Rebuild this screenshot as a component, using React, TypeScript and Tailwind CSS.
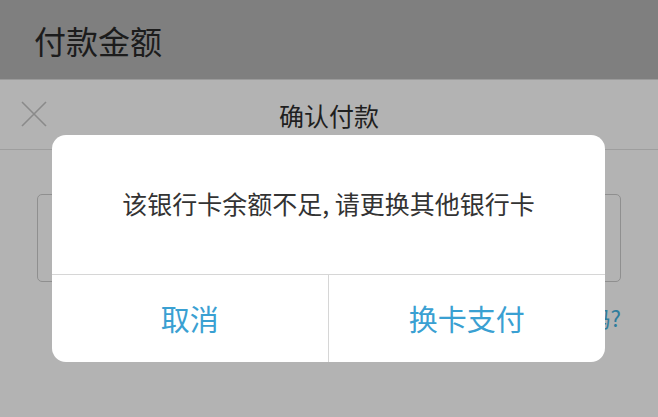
export default function App() {
  return (
    <div
      className="relative h-[417px] w-[658px] overflow-hidden bg-[#b3b3b3]"
      style={{ fontFamily: '"Noto Sans CJK SC", "Noto Sans", sans-serif' }}
    >
      {/* page title bar */}
      <div className="flex h-[80px] items-center border-b border-[#9a9a9a] bg-[#7f7f7f] pl-[34px]">
        <span className="text-[32px] leading-none text-[#1c1c1c]">付款金额</span>
      </div>

      {/* sheet header */}
      <div className="relative flex h-[70px] items-center justify-center border-b border-[#9e9e9e]">
        <svg
          className="absolute left-[21px] top-[21px]"
          width="26"
          height="26"
          viewBox="0 0 26 26"
          fill="none"
          stroke="#8a8a8a"
          strokeWidth="1.6"
        >
          <path d="M1 1 L25 25 M25 1 L1 25" />
        </svg>
        <span className="pt-[2px] text-[25px] leading-none text-[#1f1f1f]">确认付款</span>
      </div>

      {/* sheet content */}
      <div className="px-[37px] pt-[44px]">
        <div className="h-[88px] rounded-[5px] border border-[#8f8f8f]" />
        <div className="mt-[24px] flex justify-end">
          <span className="text-[22px] leading-none text-[#2f7c9c]">忘记密码?</span>
        </div>
      </div>

      {/* alert dialog */}
      <div className="absolute left-[52px] top-[135px] flex w-[553px] flex-col overflow-hidden rounded-[14px] bg-white">
        <div className="flex h-[139px] items-center justify-center pb-[3px]">
          <span className="text-[25px] leading-none text-[#333333]">该银行卡余额不足, 请更换其他银行卡</span>
        </div>
        <div className="grid h-[88px] grid-cols-2 border-t border-[#d6d6d6]">
          <button className="flex items-center justify-center border-r border-[#d6d6d6] text-[29px] leading-none text-[#3aa0d2]">
            取消
          </button>
          <button className="flex items-center justify-center text-[29px] leading-none text-[#3aa0d2]">
            换卡支付
          </button>
        </div>
      </div>
    </div>
  );
}
